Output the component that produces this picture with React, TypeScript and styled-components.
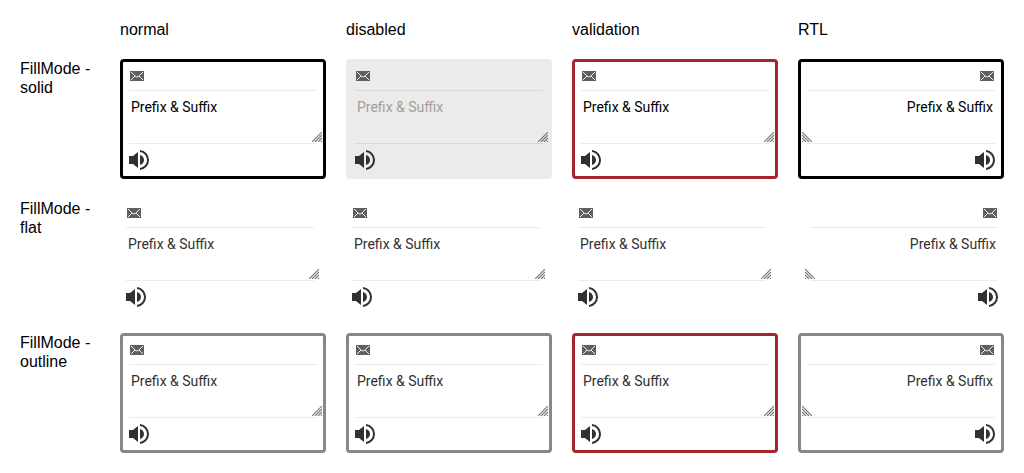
import React from "react";
import styled, { createGlobalStyle, css } from "styled-components";

const GlobalStyle = createGlobalStyle`
  * { box-sizing: border-box; }
  body { margin: 0; background: #fff; color: #000; font: 16px/19px "Liberation Sans", Arial, sans-serif; }
`;

type Fill = "solid" | "flat" | "outline";
type Variant = "normal" | "disabled" | "validation" | "rtl";

const Grid = styled.main`
  display: grid;
  grid-template-columns: 80px repeat(4, 206px);
  grid-template-rows: 19px 120px 114px 120px;
  column-gap: 20px;
  row-gap: 20px;
  padding: 20px;
`;

const Label = styled.div`
  white-space: pre-line;
`;

const frames = {
  solid: css`border: 3px solid #000; color: #000;`,
  flat: css`border: 0 solid transparent; color: #323130;`,
  outline: css`border: 3px solid #888786; color: #323130;`,
};

const Field = styled.div<{ $fill: Fill; $variant: Variant }>`
  display: flex;
  flex-direction: column;
  justify-self: ${(p) => (p.$variant === "rtl" ? "right" : "left")};
  width: ${(p) => (p.$fill === "flat" ? 200 : 206)}px;
  height: ${(p) => (p.$fill === "flat" ? 114 : 120)}px;
  border-radius: 4px;
  font: 14px/20px Roboto, sans-serif;
  ${(p) => frames[p.$fill]}
  ${(p) => p.$variant === "validation" && p.$fill !== "flat" && css`border-color: #a4262c;`}
  ${(p) => p.$variant === "disabled" && p.$fill === "solid" && css`
    border-color: #ecebe9;
    background: #ecebe9;
    color: #a19f9d;
  `}
`;

const Affix = styled.div<{ $end?: boolean }>`
  display: flex;
  align-items: center;
  height: ${(p) => (p.$end ? 32 : 28)}px;
  padding: 0 6px;
  color: #323130;
`;

const Separator = styled.div`
  flex: none;
  height: 1px;
  margin: 0 6px;
  background: rgba(0, 0, 0, 0.08);
`;

const TextArea = styled.div`
  display: flex;
  flex: none;
  flex-direction: column;
  justify-content: space-between;
  height: 52px;
  padding: 6px 1px 1px;
`;

const Value = styled.div`
  padding: 0 7px;
`;

const Grip = styled.svg<{ $mirror: boolean }>`
  align-self: flex-end;
  transform: ${(p) => (p.$mirror ? "scaleX(-1)" : "none")};
`;

const Mail = () => (
  <svg width="16" height="16" viewBox="0 0 16 16">
    <path fill="#605f5e" d="M1 3h14v10H1z" />
    <path fill="none" stroke="#fff" strokeOpacity=".9" d="M2 4l5 4.800h2L14 4M2 12l4-4M14 12l-4-4" />
  </svg>
);

const Sound = () => (
  <svg width="20" height="20" viewBox="0 0 20 20" fill="currentColor">
    <path d="M0 6v8h4l5 4V2L4 6zM11 5v10c2.400-.6 4-2.600 4-5s-1.600-4.400-4-5z" />
    <path d="M11 .05v2.010a8 8 0 0 1 0 15.880v2.010a10 10 0 0 0 0-19.900z" />
  </svg>
);

const PrefixSuffix = ({ fill, variant }: { fill: Fill; variant: Variant }) => (
  <Field $fill={fill} $variant={variant} dir={variant === "rtl" ? "rtl" : "ltr"}>
    <Affix><Mail /></Affix>
    <Separator />
    <TextArea>
      <Value>Prefix &amp; Suffix</Value>
      <Grip $mirror={variant === "rtl"} width="10" height="10" viewBox="0 0 10 10" stroke="#777" strokeWidth="1.2">
        <path d="M0 10 10 0M3 10l7-7M6 10l4-4M9 10l1-1" />
      </Grip>
    </TextArea>
    <Separator />
    <Affix $end><Sound /></Affix>
  </Field>
);

const variants: Variant[] = ["normal", "disabled", "validation", "rtl"];
const fills: Fill[] = ["solid", "flat", "outline"];

export default function App() {
  return (
    <>
      <GlobalStyle />
      <Grid>
        <span />
        {variants.map((v) => <Label key={v}>{v === "rtl" ? "RTL" : v}</Label>)}
        {fills.map((f) => (
          <React.Fragment key={f}>
            <Label>{`FillMode -\n${f}`}</Label>
            {variants.map((v) => <PrefixSuffix key={v} fill={f} variant={v} />)}
          </React.Fragment>
        ))}
      </Grid>
    </>
  );
}
